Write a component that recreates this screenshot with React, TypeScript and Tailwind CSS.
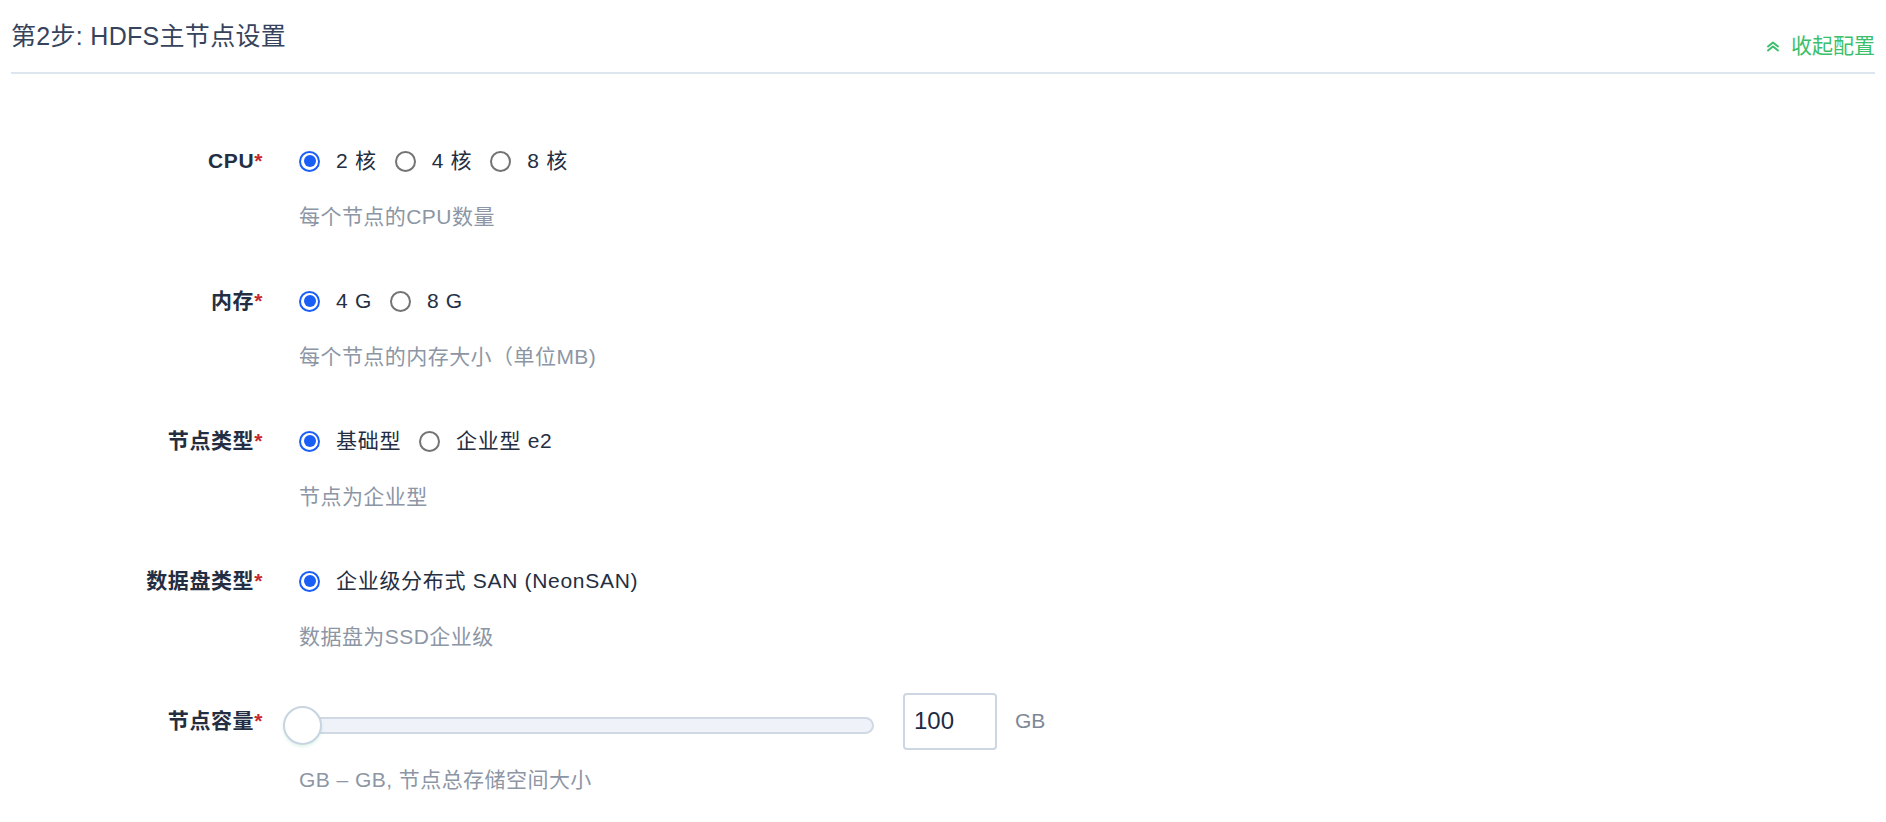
import React from "react";

const FONT = "font-['Liberation_Sans','Noto_Sans_CJK_SC',sans-serif]";

function Radio({ checked, label }: { checked?: boolean; label: string }) {
  return (
    <div className="flex items-center mr-[18px]">
      {checked ? (
        <span className="w-[21px] h-[21px] rounded-full border-2 border-[#1a5ff5] flex items-center justify-center shrink-0">
          <span className="w-[12px] h-[12px] rounded-full bg-[#1a5ff5]" />
        </span>
      ) : (
        <span className="w-[21px] h-[21px] rounded-full border-2 border-[#737373] shrink-0" />
      )}
      <span className="ml-[16px] text-[21px] tracking-[0.7px] text-[#242e42] whitespace-pre">{label}</span>
    </div>
  );
}

function Row({
  label,
  desc,
  children,
  last,
}: {
  label: string;
  desc: string;
  children: React.ReactNode;
  last?: boolean;
}) {
  return (
    <div className={`flex ${last ? "" : "mb-[54px]"}`}>
      <div className="w-[252px] shrink-0 text-right text-[21px] leading-[30px] font-semibold tracking-[0.6px] text-[#242e42]">
        {label}
        <span className="text-[#c6282d]">*</span>
      </div>
      <div className="ml-[36px] flex flex-col">
        <div className="h-[30px] flex items-center">{children}</div>
        <div className={`${last ? "mt-[29px]" : "mt-[26px]"} text-[21px] leading-[30px] tracking-[0.45px] text-[#8c96a5]`}>{desc}</div>
      </div>
    </div>
  );
}

export default function App() {
  return (
    <div className={`${FONT} bg-white w-[1886px] h-[822px] px-[11px] overflow-hidden`}>
      <div className="h-[74px] border-b-2 border-[#dde5ee] flex justify-between items-start">
        <div className="mt-[18px] text-[25px] leading-[36px] tracking-[0.3px] text-[#36435c]">第2步: HDFS主节点设置</div>
        <div className="mt-[31px] flex items-center text-[21px] leading-[30px] text-[#3cbf6c]">
          <svg width="14" height="11" viewBox="0 0 14 11" fill="none" className="mr-[11px]">
            <path d="M2 5.5 L7 1.5 L12 5.5" stroke="#3cbf6c" strokeWidth="2" strokeLinecap="round" strokeLinejoin="round" />
            <path d="M2 9.5 L7 5.5 L12 9.5" stroke="#3cbf6c" strokeWidth="2" strokeLinecap="round" strokeLinejoin="round" />
          </svg>
          收起配置
        </div>
      </div>

      <div className="pt-[72px]">
        <Row label="CPU" desc="每个节点的CPU数量">
          <Radio checked label="2 核" />
          <Radio label="4 核" />
          <Radio label="8 核" />
        </Row>
        <Row label="内存" desc="每个节点的内存大小（单位MB)">
          <Radio checked label="4 G" />
          <Radio label="8 G" />
        </Row>
        <Row label="节点类型" desc="节点为企业型">
          <Radio checked label="基础型" />
          <Radio label="企业型 e2" />
        </Row>
        <Row label="数据盘类型" desc="数据盘为SSD企业级">
          <Radio checked label="企业级分布式 SAN (NeonSAN)" />
        </Row>
        <Row label="节点容量" desc="GB – GB, 节点总存储空间大小" last>
          <div className="relative w-[591px] h-[39px] ml-[-16px] mt-[8px] shrink-0">
            <div className="absolute left-0 right-0 top-[11px] h-[17px] rounded-full bg-[#eff2f8] border-2 border-[#cfd8e3]" />
            <div className="absolute left-0 top-0 w-[39px] h-[39px] rounded-full bg-white border-2 border-[#c8d4e1] shadow-[0_2px_3px_rgba(60,190,120,0.15)]" />
          </div>
          <div className="ml-[29px] w-[94px] h-[57px] shrink-0 border-2 border-[#cdd7e3] rounded-[4px] pl-[9px] flex items-center text-[24px] text-[#1f2a44]">
            100
          </div>
          <div className="ml-[18px] text-[21px] text-[#7d8796]">GB</div>
        </Row>
      </div>
    </div>
  );
}
